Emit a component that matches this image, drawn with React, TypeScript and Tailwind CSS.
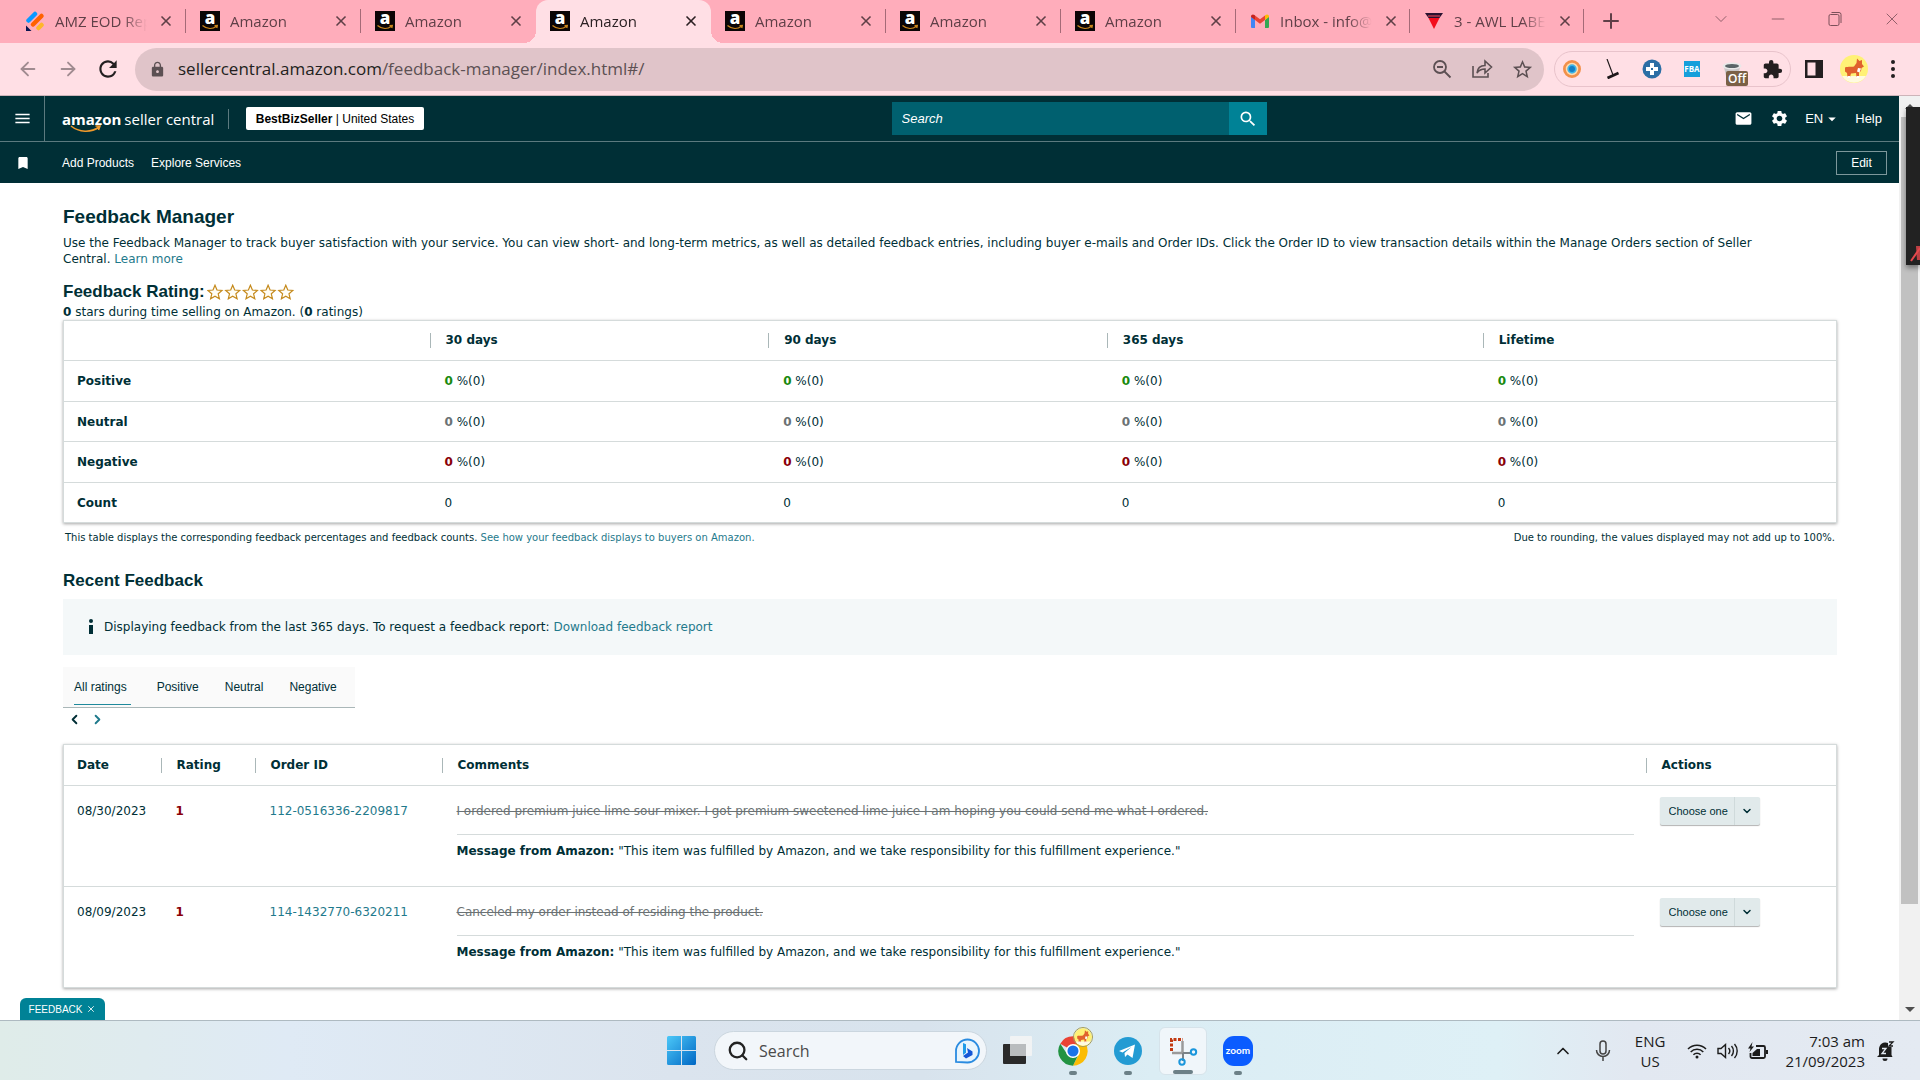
import type { ReactNode } from "react";
import {
  MdBookmark,
  MdExtension,
  MdLock,
  MdMail,
  MdMenu,
  MdRefresh,
  MdSearch,
  MdSettings,
  MdStarBorder,
  MdArrowDropDown,
} from "react-icons/md";
import { ArrowLeft, ArrowRight, ChevronDown, ChevronLeft, ChevronRight, ChevronUp, Minus, Plus, Search, X } from "lucide-react";

function AmazonIcon() {
  return (
    <svg viewBox="0 0 20 20" className="size-5 shrink-0 overflow-visible">
      <rect width="20" height="20" fill="#0b0506" />
      <text x="10" y="13" textAnchor="middle" fontSize="17" fontWeight="800" fill="#fff" fontFamily="Open Sans, sans-serif">
        a
      </text>
      <path d="M2.500 14.500c4.500 3.800 10 3.800 14 .8M14.500 14.700l2.800-.2-.5 2.500" fill="none" stroke="#c9851c" strokeWidth="1.300" />
    </svg>
  );
}

function JotformIcon() {
  return (
    <svg viewBox="0 0 20 20" className="size-5 shrink-0" strokeLinecap="round" strokeWidth="4.500">
      <path d="M3.500 9.500 10 3" stroke="#0a99ff" />
      <path d="m8 13.500 8.500-8.500" stroke="#ff6100" />
      <path d="m13.500 17 3-3" stroke="#ffb629" />
      <path d="M1 14.500V20h5.500z" fill="#0a1551" />
    </svg>
  );
}

function GmailIcon() {
  return (
    <svg viewBox="0 0 20 20" className="size-5 shrink-0">
      <path d="M1 5.500V16a1 1 0 0 0 1 1h3V9z" fill="#4285f4" />
      <path d="M19 5.500V16a1 1 0 0 1-1 1h-3V9z" fill="#34a853" />
      <path d="M5 9V4.500l5 3.800 5-3.800V9l-5 3.800z" fill="#ea4335" />
      <path d="M1 5.500C1 3.500 3 2.800 4.500 4L5 4.500V9L1 6z" fill="#c5221f" />
      <path d="M19 5.500c0-2-2-2.700-3.500-1.500l-.5.5V9l4-3z" fill="#fbbc04" />
    </svg>
  );
}

function LabelIcon() {
  return (
    <svg viewBox="0 0 20 20" className="size-5 shrink-0">
      <path d="M1 2h18l-3.500 5h-11z" fill="#2a1230" />
      <path d="M4.500 7h11L10 18z" fill="#f30d1c" />
      <path d="M4 5h12" stroke="#b43a4b" strokeWidth="1.500" />
    </svg>
  );
}

function ChromeIcon() {
  return (
    <svg viewBox="0 0 48 48" className="size-8">
      <path d="M24 24 4.900 13A22 22 0 0 1 43.100 13z" fill="#ea4335" />
      <path d="M24 14h19.600A22 22 0 0 1 24 46l8.700-17z" fill="#fbbc04" />
      <path d="M4.900 13 15.300 29 24 34l8-4.500L24 46A22 22 0 0 1 4.900 13z" fill="#229342" />
      <circle cx="24" cy="24" r="10.500" fill="#fff" />
      <circle cx="24" cy="24" r="8.300" fill="#1a73e8" />
    </svg>
  );
}

function CorgiIcon({ className }: { className: string }) {
  return (
    <svg viewBox="0 0 28 28" className={className}>
      <circle cx="14" cy="14" r="14" fill="#fff176" />
      <path d="M2 21a14 14 0 0 0 24 0z" fill="#fffbe0" />
      <path d="M5 12.500c1-1 6-.5 9-1L16.500 8l.5-4.500L19.500 6 22 5v4l2 2.500-2.500 1.500-.5 3-2 1.500V22h-2.500l-.5-4-5 .5L10 22H7.500l-.5-4-2-1.500z" fill="#e0622d" />
      <path d="m18 13 3 .5-1.500 4-2.500-1zM7.500 21H10v2H7.500zM16.500 21H19v2h-2.500z" fill="#fff" />
    </svg>
  );
}

const tabs: { title: string; icon: ReactNode; active?: boolean; width: string; divider?: boolean }[] = [
  { title: "AMZ EOD Rep", icon: <JotformIcon />, width: "w-[175px]", divider: true },
  { title: "Amazon", icon: <AmazonIcon />, width: "w-[175px]", divider: true },
  { title: "Amazon", icon: <AmazonIcon />, width: "w-[175px]" },
  { title: "Amazon", icon: <AmazonIcon />, width: "w-[175px]", active: true },
  { title: "Amazon", icon: <AmazonIcon />, width: "w-[175px]", divider: true },
  { title: "Amazon", icon: <AmazonIcon />, width: "w-[175px]", divider: true },
  { title: "Amazon", icon: <AmazonIcon />, width: "w-[175px]", divider: true },
  { title: "Inbox - info@", icon: <GmailIcon />, width: "w-[174px]", divider: true },
  { title: "3 - AWL LABE", icon: <LabelIcon />, width: "w-[174px]", divider: true },
];

function TabStrip() {
  return (
    <div className="flex h-[43px] items-center bg-[#ffadbb] pl-[11px] text-[#5f3f47]">
      {tabs.map((tab, i) => (
        <div
          key={i}
          className={`relative flex h-full shrink items-center pb-0.5 pl-3.5 ${tab.width} ${
            tab.active ? "rounded-t-xl bg-[#ffdfe5] text-[#2b2023]" : ""
          }`}
        >
          {tab.active && (
            <>
              <span className="absolute bottom-0 -left-3 size-3 bg-[radial-gradient(circle_at_0_0,#ffadbb_12px,#ffdfe5_12px)]" />
              <span className="absolute -right-3 bottom-0 size-3 bg-[radial-gradient(circle_at_100%_0,#ffadbb_12px,#ffdfe5_12px)]" />
            </>
          )}
          {tab.icon}
          <span className="ml-2.5 w-[92px] text-[15px] leading-5 whitespace-nowrap [mask-image:linear-gradient(to_right,#000_68px,transparent_92px)]">
            {tab.title}
          </span>
          <button aria-label="Close tab" className="ml-[11px]">
            <X className="size-4" strokeWidth={2.5} />
          </button>
          {tab.divider && <span className="absolute right-0 h-6 w-px bg-[#a56a77]" />}
        </div>
      ))}
      <button aria-label="New tab" className="ml-[15px] pb-0.5">
        <Plus className="size-6" />
      </button>
      <div className="ml-auto flex pb-1.5 text-[#7c505a]">
        <button aria-label="Search tabs" className="flex w-[57px] justify-center">
          <ChevronDown className="size-5" strokeWidth={1} />
        </button>
        <button aria-label="Minimize" className="flex w-[57px] justify-center">
          <Minus className="size-5" strokeWidth={1} />
        </button>
        <button aria-label="Restore" className="flex w-[57px] justify-center">
          <svg viewBox="0 0 20 20" className="size-5" fill="none" stroke="currentColor">
            <rect x="4" y="5.500" width="10" height="11" rx="1.500" />
            <path d="M6.500 3.500H14a2 2 0 0 1 2 2V14" />
          </svg>
        </button>
        <button aria-label="Close" className="flex w-[57px] justify-center">
          <X className="size-5" strokeWidth={1} />
        </button>
      </div>
    </div>
  );
}

function Toolbar() {
  return (
    <div className="flex h-[53px] items-center border-b border-[#cdb4b9] bg-[#ffdfe5] pl-[17px] text-[#231f20]">
      <button aria-label="Back" className="text-[#a08b90]">
        <ArrowLeft className="size-[22px]" strokeWidth={2} />
      </button>
      <button aria-label="Forward" className="ml-[18px] text-[#a08b90]">
        <ArrowRight className="size-[22px]" strokeWidth={2} />
      </button>
      <button aria-label="Reload" className="ml-4">
        <MdRefresh className="size-[26px]" />
      </button>
      <div className="ml-3.5 flex h-[43px] flex-1 items-center rounded-full bg-[#e0c4c9] pr-2.5 pl-3.5 text-[#5c5053]">
        <MdLock className="size-[17px]" />
        <div role="textbox" aria-label="Address" className="ml-3 flex-1 text-[17px]">
          <span className="text-[#231f20]">sellercentral.amazon.com</span>/feedback-manager/index.html#/
        </div>
        <div className="flex items-center gap-[18px]">
          <button aria-label="Zoom">
            <svg viewBox="0 0 22 22" className="size-[22px]" fill="none" stroke="currentColor" strokeWidth="1.800">
              <circle cx="9" cy="9" r="6" />
              <path d="m13.500 13.500 6 6M6 9h6" />
            </svg>
          </button>
          <button aria-label="Share">
            <svg viewBox="0 0 22 22" className="size-[22px]" fill="none" stroke="currentColor" strokeWidth="1.600">
              <path d="M2 8v11h15v-4" />
              <path d="M6 15c.5-5 3-7.500 8-7.500V3l6.500 6-6.500 6v-4c-4 0-6 1-8 4z" />
            </svg>
          </button>
          <button aria-label="Bookmark this page">
            <MdStarBorder className="size-[23px]" />
          </button>
        </div>
      </div>
      <div className="ml-2.5 flex h-[36px] items-center gap-5 rounded-full border border-[#e8c3cb] px-[7px]">
        <svg viewBox="0 0 20 20" className="size-5">
          <circle cx="10" cy="10" r="7" fill="#3ab5ea" stroke="#f2904a" strokeWidth="4" />
          <circle cx="10" cy="10" r="5.500" fill="none" stroke="#f9dcb4" strokeWidth="1.500" />
          <circle cx="10" cy="10" r="3" fill="#137fc4" />
        </svg>
        <svg viewBox="0 0 20 20" className="size-5" stroke="#1d1719">
          <path d="m5 0 6 16" strokeWidth="1.200" />
          <path d="m5.500 19 11-5" strokeWidth="2.800" />
        </svg>
        <svg viewBox="0 0 20 20" className="size-5">
          <circle cx="10" cy="10" r="9.500" fill="#2b6ea5" />
          <path d="M8 4h4v4h4v4h-4v4H8v-4H4V8h4z" fill="#fff" />
          <path d="M9 9h2v2H9z" fill="#2b6ea5" />
        </svg>
        <span className="flex h-4 w-5 justify-center">
          <span className="flex h-4 w-4 items-center justify-center bg-[#159fdb] text-[8px] leading-none font-bold text-white">FBA</span>
        </span>
        <span className="relative size-5">
          <svg viewBox="0 0 20 20" className="size-5">
            <path d="M2 8h16l-2 9H4z" fill="#c9c6c7" />
            <ellipse cx="10" cy="7" rx="9.500" ry="3.500" fill="#e8e8e8" />
            <ellipse cx="10" cy="7" rx="7" ry="2" fill="#5b6467" />
          </svg>
          <span className="absolute top-3 left-1 rounded-xs bg-[#7a6046] px-0.5 text-xs leading-[15px] font-semibold text-white">Off</span>
        </span>
        <MdExtension className="size-[21px]" />
      </div>
      <div className="flex items-center pr-4 pl-3.5">
        <svg viewBox="0 0 18 18" className="size-[18px]">
          <path d="M0 0h18v18H0zM2.500 2.500v13h8v-13z" fill="currentColor" fillRule="evenodd" />
        </svg>
        <CorgiIcon className="ml-[17px] size-[28px]" />
        <button aria-label="Menu" className="mr-[9px] ml-[23px]">
          <svg viewBox="0 0 4 18" className="h-[18px] w-1" fill="currentColor">
            <circle cx="2" cy="2" r="2" />
            <circle cx="2" cy="9" r="2" />
            <circle cx="2" cy="16" r="2" />
          </svg>
        </button>
      </div>
    </div>
  );
}

function SiteHeader() {
  return (
    <header className="bg-[#002f36] font-['Liberation_Sans',Arial,sans-serif] text-xs text-white">
      <div className="flex h-[46px] items-center border-b border-[#5c7a7f]">
        <button aria-label="Open menu" className="flex h-full w-[45px] items-center justify-center border-r border-[#5c7a7f]">
          <MdMenu className="size-[19px]" />
        </button>
        <a href="#" className="relative ml-[17px] flex w-[150px] items-baseline gap-[3px] font-['Open_Sans',sans-serif] text-[15px] leading-6 whitespace-nowrap">
          <b>amazon</b>
          <span>seller central</span>
          <svg viewBox="0 0 32 8" className="absolute top-[18px] left-2 h-2 w-8" fill="none" stroke="#f09a2c" strokeWidth="1.600">
            <path d="M1 1c8 6.500 20 7 28 1M25.500 1h4.500l-1.500 4" />
          </svg>
        </a>
        <span className="ml-4 h-5 w-px bg-[#5c7a7f]" />
        <button className="ml-[17px] flex h-[23px] w-[178px] items-center justify-center rounded-xs bg-white whitespace-pre text-black">
          <span className="font-bold">BestBizSeller</span> | United States
        </button>
        <form className="ml-auto flex h-[33px] w-[375px]">
          <input aria-label="Search" placeholder="Search" className="min-w-0 flex-1 bg-[#00606f] px-2.5 text-[13px] italic placeholder:text-white" />
          <button type="button" aria-label="Submit search" className="flex w-[38px] items-center justify-center bg-[#008296]">
            <MdSearch className="size-5" />
          </button>
        </form>
        <div className="ml-auto flex items-center pr-[17px] text-[13px]">
          <button aria-label="Messages">
            <MdMail className="size-[19px]" />
          </button>
          <button aria-label="Settings" className="ml-[17px]">
            <MdSettings className="size-[19px]" />
          </button>
          <button className="ml-4 flex items-center">
            EN
            <MdArrowDropDown className="size-[18px]" />
          </button>
          <a href="#" className="ml-3.5">
            Help
          </a>
        </div>
      </div>
      <nav className="flex h-[41px] items-center pr-3 pl-[15px]">
        <MdBookmark className="size-4" />
        <a href="#" className="ml-[31px]">
          Add Products
        </a>
        <a href="#" className="ml-[17px]">
          Explore Services
        </a>
        <button className="ml-auto h-6 w-[51px] border border-[#7d979b]">Edit</button>
      </nav>
    </header>
  );
}

const periods = ["30 days", "90 days", "365 days", "Lifetime"];
const ratingRows = [
  { label: "Positive", color: "text-[#1a8a0f]" },
  { label: "Neutral", color: "text-[#6b7274]" },
  { label: "Negative", color: "text-[#8a0008]" },
];

const headCell = "p-0 text-left font-bold";
const headDivider = "block border-l border-[#aab7b8] pl-[15px] leading-[15px]";
const tableCard = "w-full table-fixed border border-[#d5dbdb] shadow-[0_1px_3px_rgba(0,0,0,0.35)]";
const row = "h-10 border-b border-[#d5dbdb] even:h-[41px]";

function RatingTable() {
  return (
    <table className={tableCard}>
      <colgroup>
        <col className="w-[366px]" />
        <col className="w-[19.1%]" />
        <col className="w-[19.1%]" />
        <col className="w-[21.2%]" />
        <col />
      </colgroup>
      <tbody>
        <tr className={row}>
          <td />
          {periods.map((p) => (
            <th key={p} className={headCell}>
              <span className={headDivider}>{p}</span>
            </th>
          ))}
        </tr>
        {ratingRows.map((r) => (
          <tr key={r.label} className={row}>
            <th className="p-0 pl-[13px] text-left">{r.label}</th>
            {periods.map((p) => (
              <td key={p} className="pl-[15px]">
                <b className={r.color}>0</b> %(0)
              </td>
            ))}
          </tr>
        ))}
        <tr className={row}>
          <th className="p-0 pl-[13px] text-left">Count</th>
          {periods.map((p) => (
            <td key={p} className="pl-[15px]">
              0
            </td>
          ))}
        </tr>
      </tbody>
    </table>
  );
}

const feedback = [
  {
    date: "08/30/2023",
    order: "112-0516336-2209817",
    comment: "I ordered premium juice lime sour mixer. I got premium sweetened lime juice I am hoping you could send me what I ordered.",
  },
  {
    date: "08/09/2023",
    order: "114-1432770-6320211",
    comment: "Canceled my order instead of residing the product.",
  },
];

function FeedbackTable() {
  return (
    <table className={`mt-3.5 ${tableCard}`}>
      <colgroup>
        <col className="w-[97px]" />
        <col className="w-[94px]" />
        <col className="w-[187px]" />
        <col />
        <col className="w-[191px]" />
      </colgroup>
      <thead>
        <tr className="h-[41px] border-b border-[#d5dbdb]">
          <th className="p-0 pl-[13px] text-left">Date</th>
          {["Rating", "Order ID", "Comments", "Actions"].map((h) => (
            <th key={h} className={headCell}>
              <span className={headDivider}>{h}</span>
            </th>
          ))}
        </tr>
      </thead>
      <tbody>
        {feedback.map((f) => (
          <tr key={f.order} className="h-[101px] border-b border-[#d5dbdb] align-top">
            <td className="pt-[17px] pl-[13px]">{f.date}</td>
            <td className="pt-[17px] pl-[15px] font-bold text-[#8a0008]">1</td>
            <td className="pt-[17px] pl-[15px]">
              <a href="#" className="text-[#1f7a8c]">
                {f.order}
              </a>
            </td>
            <td className="pt-[17px] pr-3 pl-[15px]">
              <p className="border-b border-[#d5dbdb] pb-[15px] text-[#6b7274] line-through">{f.comment}</p>
              <p className="pt-2">
                <b>Message from Amazon:</b> "This item was fulfilled by Amazon, and we take responsibility for this fulfillment
                experience."
              </p>
            </td>
            <td className="pt-[11px] pl-3.5">
              <div className="relative h-7 w-[100px] rounded-xs bg-[#e1eaeb] font-['Liberation_Sans',Arial,sans-serif] text-[11px] shadow-[0_1px_1px_rgba(0,0,0,0.3)]">
                <select aria-label={`Action for order ${f.order}`} className="h-full w-full appearance-none pl-[9px]">
                  <option>Choose one</option>
                </select>
                <span className="pointer-events-none absolute inset-y-0 right-0 flex w-[26px] items-center justify-center border-l border-[#cfdadb]">
                  <ChevronDown className="size-3" strokeWidth={3} />
                </span>
              </div>
            </td>
          </tr>
        ))}
      </tbody>
    </table>
  );
}

function FeedbackManager() {
  return (
    <main className="flex-1 bg-white pt-[22px] pr-[62px] pl-[63px] font-['DejaVu_Sans',Verdana,sans-serif] text-xs leading-4 text-[#002f36]">
      <h1 className="font-['Liberation_Sans',Arial,sans-serif] text-[19px] leading-6 font-bold">Feedback Manager</h1>
      <p className="mt-1.5 pr-12">
        Use the Feedback Manager to track buyer satisfaction with your service. You can view short- and long-term metrics, as
        well as detailed feedback entries, including buyer e-mails and Order IDs. Click the Order ID to view transaction details
        within the Manage Orders section of Seller Central.{" "}
        <a href="#" className="text-[#1f7a8c]">
          Learn more
        </a>
      </p>
      <div className="mt-[13px] flex items-center gap-0.5">
        <h2 className="font-['Liberation_Sans',Arial,sans-serif] text-[17px] leading-6 font-bold">Feedback Rating:</h2>
        <svg viewBox="0 0 88 17" className="h-[17px] w-[88px]" fill="#fffdf5" stroke="#c58a1c" strokeWidth="1.200">
          {[0, 1, 2, 3, 4].map((i) => (
            <path
              key={i}
              transform={`translate(${i * 17.7} 0)`}
              d="M8 1.200 10 6l5 .5-3.800 3.300 1.200 5L8 12.200l-4.400 2.600 1.200-5L1 6.500 6 6z"
            />
          ))}
        </svg>
      </div>
      <p>
        <b>0</b> stars during time selling on Amazon. (<b>0</b> ratings)
      </p>
      <RatingTable />
      <div className="mt-[7px] flex justify-between px-0.5 text-[10px]">
        <p>
          This table displays the corresponding feedback percentages and feedback counts.{" "}
          <a href="#" className="text-[#1f7a8c]">
            See how your feedback displays to buyers on Amazon.
          </a>
        </p>
        <p>Due to rounding, the values displayed may not add up to 100%.</p>
      </div>

      <h2 className="mt-[23px] font-['Liberation_Sans',Arial,sans-serif] text-[17px] leading-6 font-bold">Recent Feedback</h2>
      <div className="mt-1.5 flex h-14 items-center bg-[#f4f8f9] pl-6">
        <svg viewBox="0 0 8 18" className="mr-[9px] h-[18px] w-2" fill="currentColor">
          <circle cx="4" cy="3" r="2" />
          <path d="M2 7h4v9H2z" />
        </svg>
        <p>
          Displaying feedback from the last 365 days. To request a feedback report:{" "}
          <a href="#" className="text-[#1f7a8c]">
            Download feedback report
          </a>
        </p>
      </div>

      <div
        role="tablist"
        className="mt-3 flex h-[41px] w-[292px] items-center gap-[26px] border-b border-[#aab7b8] bg-[#fafafa] pl-[11px] font-['Liberation_Sans',Arial,sans-serif]"
      >
        <button role="tab" aria-selected="true" className="relative h-full pr-1 font-medium">
          All ratings
          <span className="absolute inset-x-0 bottom-0.5 h-px bg-[#1f8a9c]" />
        </button>
        <button role="tab">Positive</button>
        <button role="tab">Neutral</button>
        <button role="tab">Negative</button>
      </div>
      <div className="flex h-[22px] items-center gap-2 pl-1">
        <button aria-label="Previous page">
          <ChevronLeft className="size-[15px]" strokeWidth={3} />
        </button>
        <button aria-label="Next page" className="text-[#1f7a8c]">
          <ChevronRight className="size-[15px]" strokeWidth={3} />
        </button>
      </div>
      <FeedbackTable />
    </main>
  );
}

function Scrollbar() {
  return (
    <div className="relative flex w-[21px] flex-col items-center bg-[#f1f1f1]">
      <div className="flex h-[21px] items-center text-[#505050]">
        <svg viewBox="0 0 10 5" className="h-[5px] w-2.5" fill="currentColor">
          <path d="M5 0l5 5H0z" />
        </svg>
      </div>
      <div className="w-[17px] flex-[787] bg-[#c1c1c1]" />
      <div className="flex-[95]" />
      <div className="flex h-[21px] items-center text-[#505050]">
        <svg viewBox="0 0 10 5" className="h-[5px] w-2.5" fill="currentColor">
          <path d="M0 0h10L5 5z" />
        </svg>
      </div>
      {/* meeting toolbar peeking in from the screen edge */}
      <div className="absolute top-[11px] right-0 h-[158px] w-3.5 overflow-hidden bg-[#222] shadow-[0_3px_5px_rgba(0,0,0,0.4)]">
        <svg viewBox="0 0 14 20" className="absolute right-0 bottom-0 h-5 w-3.5">
          <path d="m5 16 9-13" stroke="#e5484d" strokeWidth="2" />
          <path d="M10 1h4v14h-3z" fill="#e5484d" opacity=".8" />
        </svg>
      </div>
    </div>
  );
}

function TaskApp({ children, active, plain }: { children: ReactNode; active?: boolean; plain?: boolean }) {
  return (
    <button className={`relative flex h-12 w-12 items-center justify-center rounded-md ${active ? "border border-[#d6e3ea] bg-[#f0f6fa]" : ""}`}>
      {children}
      {!plain && <span className={`absolute bottom-0 h-1 rounded-full bg-[#6c8087] ${active ? "w-5" : "w-2"}`} />}
    </button>
  );
}

function Taskbar() {
  return (
    <footer className="flex h-[60px] items-center border-t border-[#aebac1] bg-[linear-gradient(to_right,#dfece9_0%,#dfeaf5_15%,#dbe4ee_35%,#d8e3ed_48%,#dbedf4_60%,#def0f6_78%,#e2e8f1_85%,#e4eaf2_100%)] text-[#1c1c1c]">
      <div className="flex flex-1 items-center justify-end">
        <button aria-label="Start">
          <svg viewBox="0 0 29 29" className="size-[29px]">
            <defs>
              <linearGradient id="win" x1="0" y1="0" x2="1" y2="1">
                <stop offset="0" stopColor="#4cc8f8" />
                <stop offset="1" stopColor="#0067c4" />
              </linearGradient>
            </defs>
            <path d="M0 1.500A1.500 1.500 0 0 1 1.500 0H14v14H0zM15 0h12.500A1.500 1.500 0 0 1 29 1.500V14H15zM0 15h14v14H1.500A1.500 1.500 0 0 1 0 27.500zM15 15h14v12.500a1.500 1.500 0 0 1-1.500 1.500H15z" fill="url(#win)" />
          </svg>
        </button>
        <label className="ml-[18px] flex h-[39px] w-[273px] items-center rounded-full border border-[#cbd6df] bg-[#f2f6fa] pr-1.5 pl-3">
          <Search className="size-[22px] text-[#222]" strokeWidth={2.5} />
          <input aria-label="Search" placeholder="Search" className="ml-2.5 min-w-0 flex-1 bg-transparent text-base placeholder:text-[#4a4a4a]" />
          <svg viewBox="0 0 26 26" className="size-[26px]" fill="none">
            <path d="M2 24V13a11.500 11.500 0 1 1 11.500 11.500z" stroke="#2a8be0" strokeWidth="1.800" fill="#e8f5fd" />
            <path d="m9 5 3 1.200v8.500L9 17z" fill="#1f9be8" />
            <path d="m13 10 5.500 3.500v3.500L12 20.500 9 18l5-3.500z" fill="#1557d6" />
          </svg>
        </label>
        <div className="ml-[7px] flex gap-[7px]">
          <TaskApp plain>
            <svg viewBox="0 0 32 32" className="size-8">
              <rect x="1" y="9" width="23" height="20" rx="1" fill="#2a2a2a" />
              <rect x="8" y="1" width="22" height="20" rx="1" fill="#f4f4f4" opacity=".85" />
              <path d="M8 9h16v12H8z" fill="#b9bcbe" />
            </svg>
          </TaskApp>
          <TaskApp>
            <ChromeIcon />
            <CorgiIcon className="absolute top-0 right-1 size-5 rounded-full border border-[#a59b5a]" />
          </TaskApp>
          <TaskApp>
            <svg viewBox="0 0 28 28" className="size-7">
              <circle cx="14" cy="14" r="14" fill="#239bd3" />
              <path d="m5 14 16-6.500-2.500 13.500-5-3.500-2.500 2.500-.5-4 7-6-9 5.500z" fill="#fff" />
            </svg>
          </TaskApp>
          <TaskApp active>
            <svg viewBox="0 0 30 30" className="size-[30px]" fill="none">
              <path d="M3.500 15V3.500H15" stroke="#c23a12" strokeWidth="3" strokeDasharray="3 1.500" />
              <path d="M14.500 5v12H4" stroke="#9a9a9a" strokeWidth="2.500" />
              <path d="M15 17h8M15 17v8" stroke="#7a8287" strokeWidth="2" />
              <circle cx="25.500" cy="16" r="2.700" stroke="#1a96dc" strokeWidth="2" />
              <circle cx="14" cy="26" r="2.700" stroke="#1a96dc" strokeWidth="2" />
            </svg>
          </TaskApp>
          <TaskApp>
            <span className="flex size-[30px] items-center justify-center rounded-[11px] bg-[#0b5cff] font-['Lato',sans-serif] text-[10px] font-bold text-white">
              zoom
            </span>
          </TaskApp>
        </div>
      </div>
      <div className="flex w-[658px] items-center justify-end pr-[25px]">
        <button aria-label="Show hidden icons">
          <ChevronUp className="size-5" strokeWidth={2} />
        </button>
        <svg viewBox="0 0 16 22" className="ml-[22px] h-[22px] w-4" fill="none" stroke="#444" strokeWidth="1.500">
          <rect x="5" y="1" width="6" height="13" rx="3" />
          <path d="M1.500 10a6.500 6.500 0 0 0 13 0M8 17v4" />
        </svg>
        <div className="ml-6 text-center text-[15px] leading-5">
          <div>ENG</div>
          <div>US</div>
        </div>
        <svg viewBox="0 0 20 16" className="ml-[22px] h-4 w-5" fill="none" stroke="currentColor" strokeWidth="1.500">
          <path d="M1 6a12.500 12.500 0 0 1 18 0M3.700 9a8.700 8.700 0 0 1 12.600 0M6.400 11.800a5 5 0 0 1 7.200 0" />
          <circle cx="10" cy="14" r="1.500" fill="currentColor" stroke="none" />
        </svg>
        <svg viewBox="0 0 21 18" className="ml-2.5 h-[18px] w-[21px]" fill="none" stroke="currentColor" strokeWidth="1.400">
          <path d="M1 6.500h3l4.500-4v13l-4.500-4H1zM11.500 6a4.500 4.500 0 0 1 0 6M14.500 4a7.500 7.500 0 0 1 0 10M17.500 2a10.500 10.500 0 0 1 0 14" />
        </svg>
        <svg viewBox="0 0 21 18" className="ml-2.5 h-[18px] w-[21px]" fill="none" stroke="currentColor" strokeWidth="1.800">
          <path d="M8 4h7.500A1.500 1.500 0 0 1 17 5.500v9a1.500 1.500 0 0 1-1.500 1.500H4a1.500 1.500 0 0 1-1.500-1.500V11" />
          <path d="M18 8v4h2V8z" fill="currentColor" stroke="none" />
          <path d="M9 7h3v7H4.500v-3z" fill="currentColor" stroke="none" />
          <path d="M4.500 0 0 6.500h2.500L1.500 10 6 4.500H3.500z" fill="currentColor" stroke="none" />
        </svg>
        <div className="ml-4 text-right text-[15px] leading-5">
          <div>7:03 am</div>
          <div>21/09/2023</div>
        </div>
        <svg viewBox="0 0 18 20" className="ml-3 h-5 w-[18px]" fill="currentColor">
          <path d="M2 14V8a6.500 6.500 0 0 1 9-6v4h3.500v8l1 2H0zM5.500 17.500h5a2.500 2.500 0 0 1-5 0z" />
          <path d="M12 1h4l-4 4h4" fill="none" stroke="currentColor" strokeWidth="1.300" />
          <path d="M5 7.500h4l-4 5h4" fill="none" stroke="#e3e9f1" strokeWidth="1.300" />
        </svg>
      </div>
    </footer>
  );
}

export default function App() {
  return (
    <div className="flex min-h-screen flex-col font-['Open_Sans','Segoe_UI',sans-serif]">
      <TabStrip />
      <Toolbar />
      <div className="flex flex-1">
        <div className="relative flex min-w-0 flex-1 flex-col">
          <SiteHeader />
          <FeedbackManager />
          <button className="absolute bottom-0 left-5 flex h-[22px] w-[85px] items-center justify-center gap-1 rounded-t-md bg-[#008296] font-['Liberation_Sans',Arial,sans-serif] text-[10px] text-white">
            FEEDBACK
            <X className="size-2.5" />
          </button>
        </div>
        <Scrollbar />
      </div>
      <Taskbar />
    </div>
  );
}
